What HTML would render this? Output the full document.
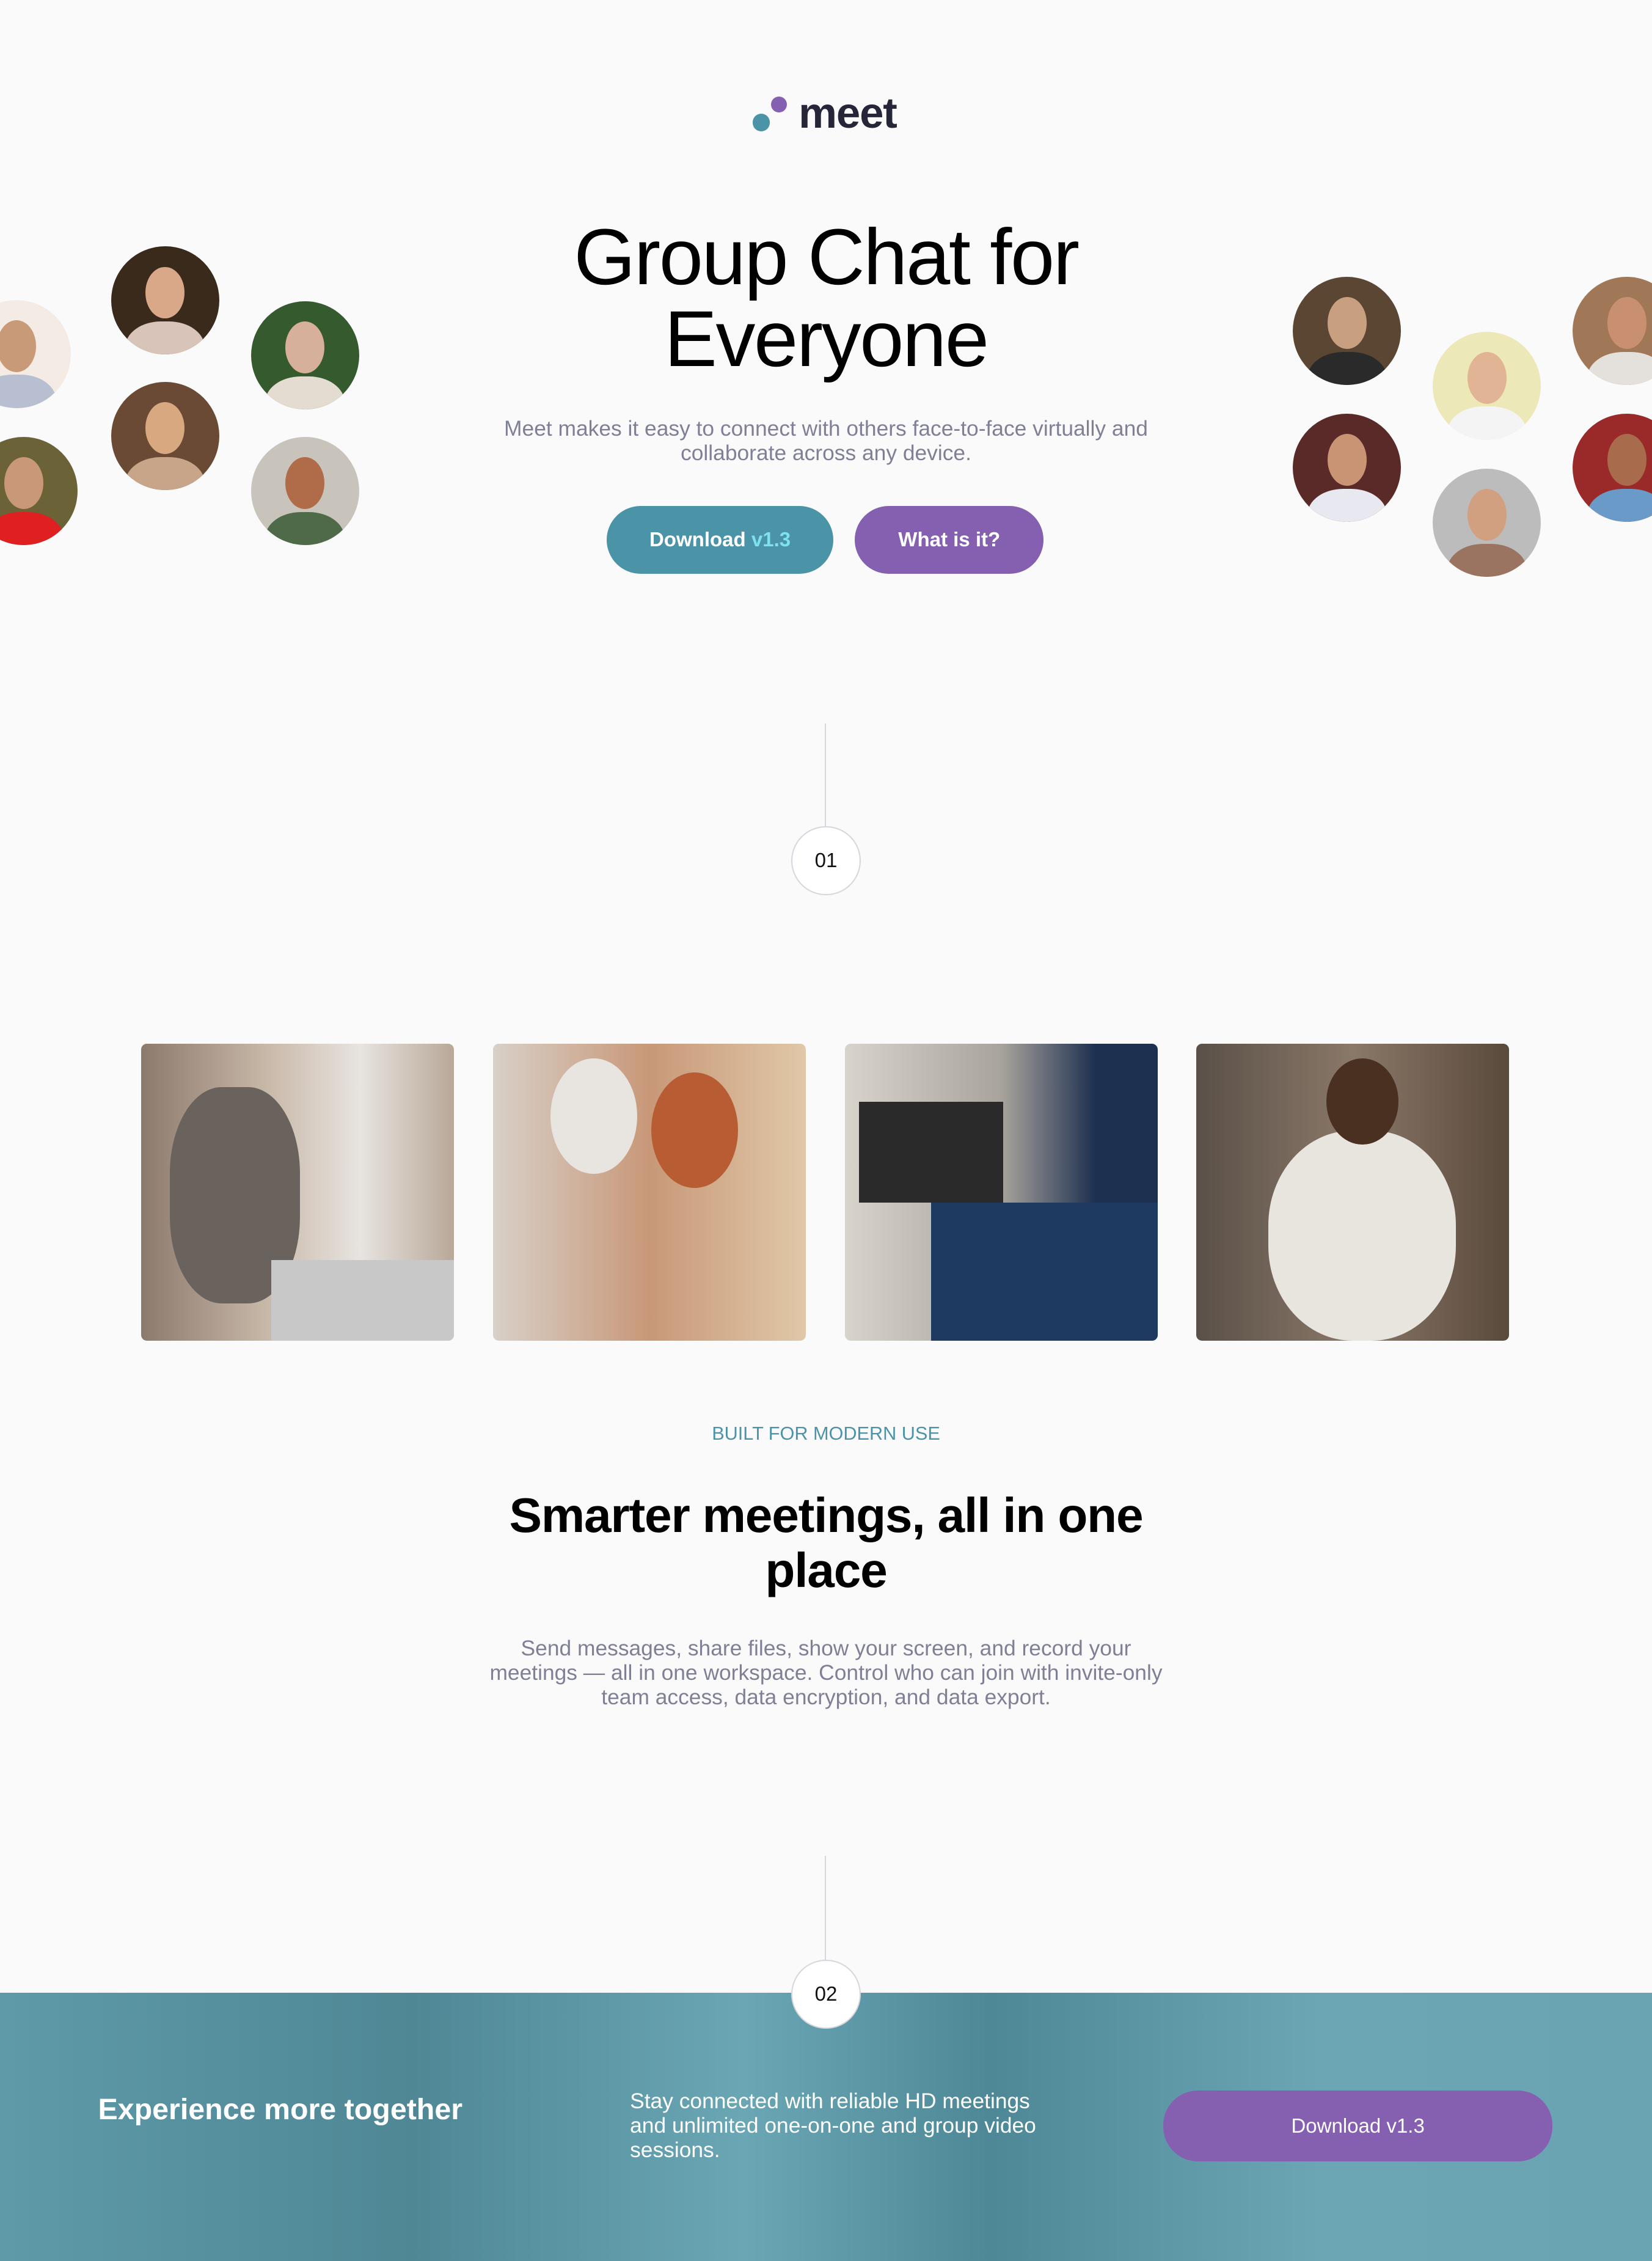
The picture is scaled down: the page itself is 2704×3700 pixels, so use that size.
<!DOCTYPE html>
<html><head><meta charset="utf-8"><style>
*{margin:0;padding:0;box-sizing:border-box}
html,body{width:2704px;height:3700px;overflow:hidden;background:#fafafa}
#w{zoom:2.35951;width:1146px;height:1568px;position:relative;font-family:"Liberation Sans",sans-serif;background:#fafafa;overflow:hidden}
.a{position:absolute}
.av{position:absolute;width:75px;height:75px;border-radius:50%;overflow:hidden}
.av i{position:absolute;left:24px;top:14px;width:27px;height:36px;border-radius:50%}
.av b{position:absolute;left:10px;top:52px;width:55px;height:40px;border-radius:45%}
.c{text-align:center;left:0;width:1146px}
.btn{position:absolute;border-radius:24px;color:#fff;font-weight:bold;font-size:14px;text-align:center}
.ph{position:absolute;top:724px;width:217px;height:206px;border-radius:4px;overflow:hidden}
.num{position:absolute;left:549px;width:48px;height:48px;border-radius:50%;border:1px solid #d6d6de;background:#fff;text-align:center;line-height:46px;font-size:14px;color:#111}
.ln{position:absolute;left:572px;width:1px;background:#d6d6de}
</style></head><body><div id="w">
<div class="a" style="left:522px;top:79px;width:12px;height:12px;border-radius:50%;background:#4b94a8"></div>
<div class="a" style="left:535px;top:67px;width:11px;height:11px;border-radius:50%;background:#8560b0"></div>
<div class="a" style="left:554px;top:61px;font-size:30px;font-weight:bold;color:#262639;letter-spacing:-0.5px">meet</div>

<div class="a c" style="top:150px;font-size:55px;line-height:57px;color:#000;letter-spacing:-1px">Group Chat for<br>Everyone</div>
<div class="a c" style="top:289px;font-size:15px;line-height:17px;color:#7f7f96">Meet makes it easy to connect with others face-to-face virtually and<br>collaborate across any device.</div>
<div class="btn" style="left:421px;top:351px;width:157px;height:47px;line-height:47px;background:#4b94a8">Download <span style="color:#7fe0f0">v1.3</span></div>
<div class="btn" style="left:593px;top:351px;width:131px;height:47px;line-height:47px;background:#8560b0">What is it?</div>

<div class="av" style="left:-26px;top:208px;background:#f4ece4"><i style="background:#c89a78"></i><b style="background:#b8bfd0"></b></div>
<div class="av" style="left:77px;top:171px;background:#3a2a1c"><i style="background:#d8a888"></i><b style="background:#d8c4b8"></b></div>
<div class="av" style="left:174px;top:209px;background:#355a2e"><i style="background:#d6b09a"></i><b style="background:#e4dcd0"></b></div>
<div class="av" style="left:77px;top:265px;background:#6a4a34"><i style="background:#d8a880"></i><b style="background:#c8a488"></b></div>
<div class="av" style="left:-21px;top:303px;background:#6b6238"><i style="background:#c89878"></i><b style="background:#e02020"></b></div>
<div class="av" style="left:174px;top:303px;background:#c8c4bc"><i style="background:#b06c48"></i><b style="background:#4e6a48"></b></div>

<div class="av" style="left:897px;top:192px;background:#5a4632"><i style="background:#c8a080"></i><b style="background:#2a2a2a"></b></div>
<div class="av" style="left:994px;top:230px;background:#ece8b8"><i style="background:#e0b494"></i><b style="background:#f4f4f4"></b></div>
<div class="av" style="left:897px;top:287px;background:#5a2a28"><i style="background:#c89474"></i><b style="background:#e8e8f0"></b></div>
<div class="av" style="left:994px;top:325px;background:#bcbcbc"><i style="background:#d0a080"></i><b style="background:#9a7460"></b></div>
<div class="av" style="left:1091px;top:192px;background:#a07858"><i style="background:#c89070"></i><b style="background:#e4e0dc"></b></div>
<div class="av" style="left:1091px;top:287px;background:#9a2a2a"><i style="background:#a86c4c"></i><b style="background:#6a9ac8"></b></div>

<div class="ln" style="top:502px;height:72px"></div>
<div class="num" style="top:573px">01</div>

<div class="ph" style="left:98px;background:linear-gradient(90deg,#8c7a6c 0%,#c8b8a8 40%,#e8e4e0 70%,#b8a898 100%)"><div class="a" style="left:20px;top:30px;width:90px;height:150px;border-radius:40%;background:#6a625c"></div><div class="a" style="left:90px;top:150px;width:127px;height:56px;background:#c8c8c8"></div></div>
<div class="ph" style="left:342px;background:linear-gradient(90deg,#d8d0c8,#c89878 50%,#e0c8a8)"><div class="a" style="left:40px;top:10px;width:60px;height:80px;border-radius:50%;background:#e8e4e0"></div><div class="a" style="left:110px;top:20px;width:60px;height:80px;border-radius:50%;background:#b85c34"></div></div>
<div class="ph" style="left:586px;background:linear-gradient(90deg,#d8d4cc,#a8a49c 50%,#1e3050 80%)"><div class="a" style="left:10px;top:40px;width:100px;height:70px;background:#2a2a2a"></div><div class="a" style="left:60px;top:110px;width:157px;height:96px;background:#1f3a60"></div></div>
<div class="ph" style="left:830px;background:linear-gradient(90deg,#5a5048,#8a7868 50%,#5a4a3c)"><div class="a" style="left:50px;top:60px;width:130px;height:146px;border-radius:45%;background:#e8e4de"></div><div class="a" style="left:90px;top:10px;width:50px;height:60px;border-radius:50%;background:#4a3020"></div></div>

<div class="a c" style="top:987px;font-size:13px;color:#4b94a8">BUILT FOR MODERN USE</div>
<div class="a c" style="top:1032px;font-size:34px;line-height:38px;color:#000;font-weight:bold;letter-spacing:-0.5px">Smarter meetings, all in one<br>place</div>
<div class="a c" style="top:1135px;font-size:15px;line-height:17px;color:#7f7f96">Send messages, share files, show your screen, and record your<br>meetings — all in one workspace. Control who can join with invite-only<br>team access, data encryption, and data export.</div>

<div class="ln" style="top:1287px;height:72px"></div>
<div class="a" style="left:0;top:1382px;width:1146px;height:186px;background:linear-gradient(90deg,#5e9aa8 0%,#4f8795 25%,#6aa6b4 45%,#4e8896 60%,#6ca6b4 80%,#6aa4b2 100%)"></div>
<div class="num" style="top:1359px">02</div>
<div class="a" style="left:68px;top:1451px;font-size:20.5px;font-weight:bold;color:#fff">Experience more together</div>
<div class="a" style="left:437px;top:1449px;font-size:15px;line-height:17px;color:#fff;width:295px">Stay connected with reliable HD meetings and unlimited one-on-one and group video sessions.</div>
<div class="btn" style="left:807px;top:1450px;width:270px;height:49px;line-height:49px;background:#8560b0;font-weight:normal">Download v1.3</div>
</div></body></html>
